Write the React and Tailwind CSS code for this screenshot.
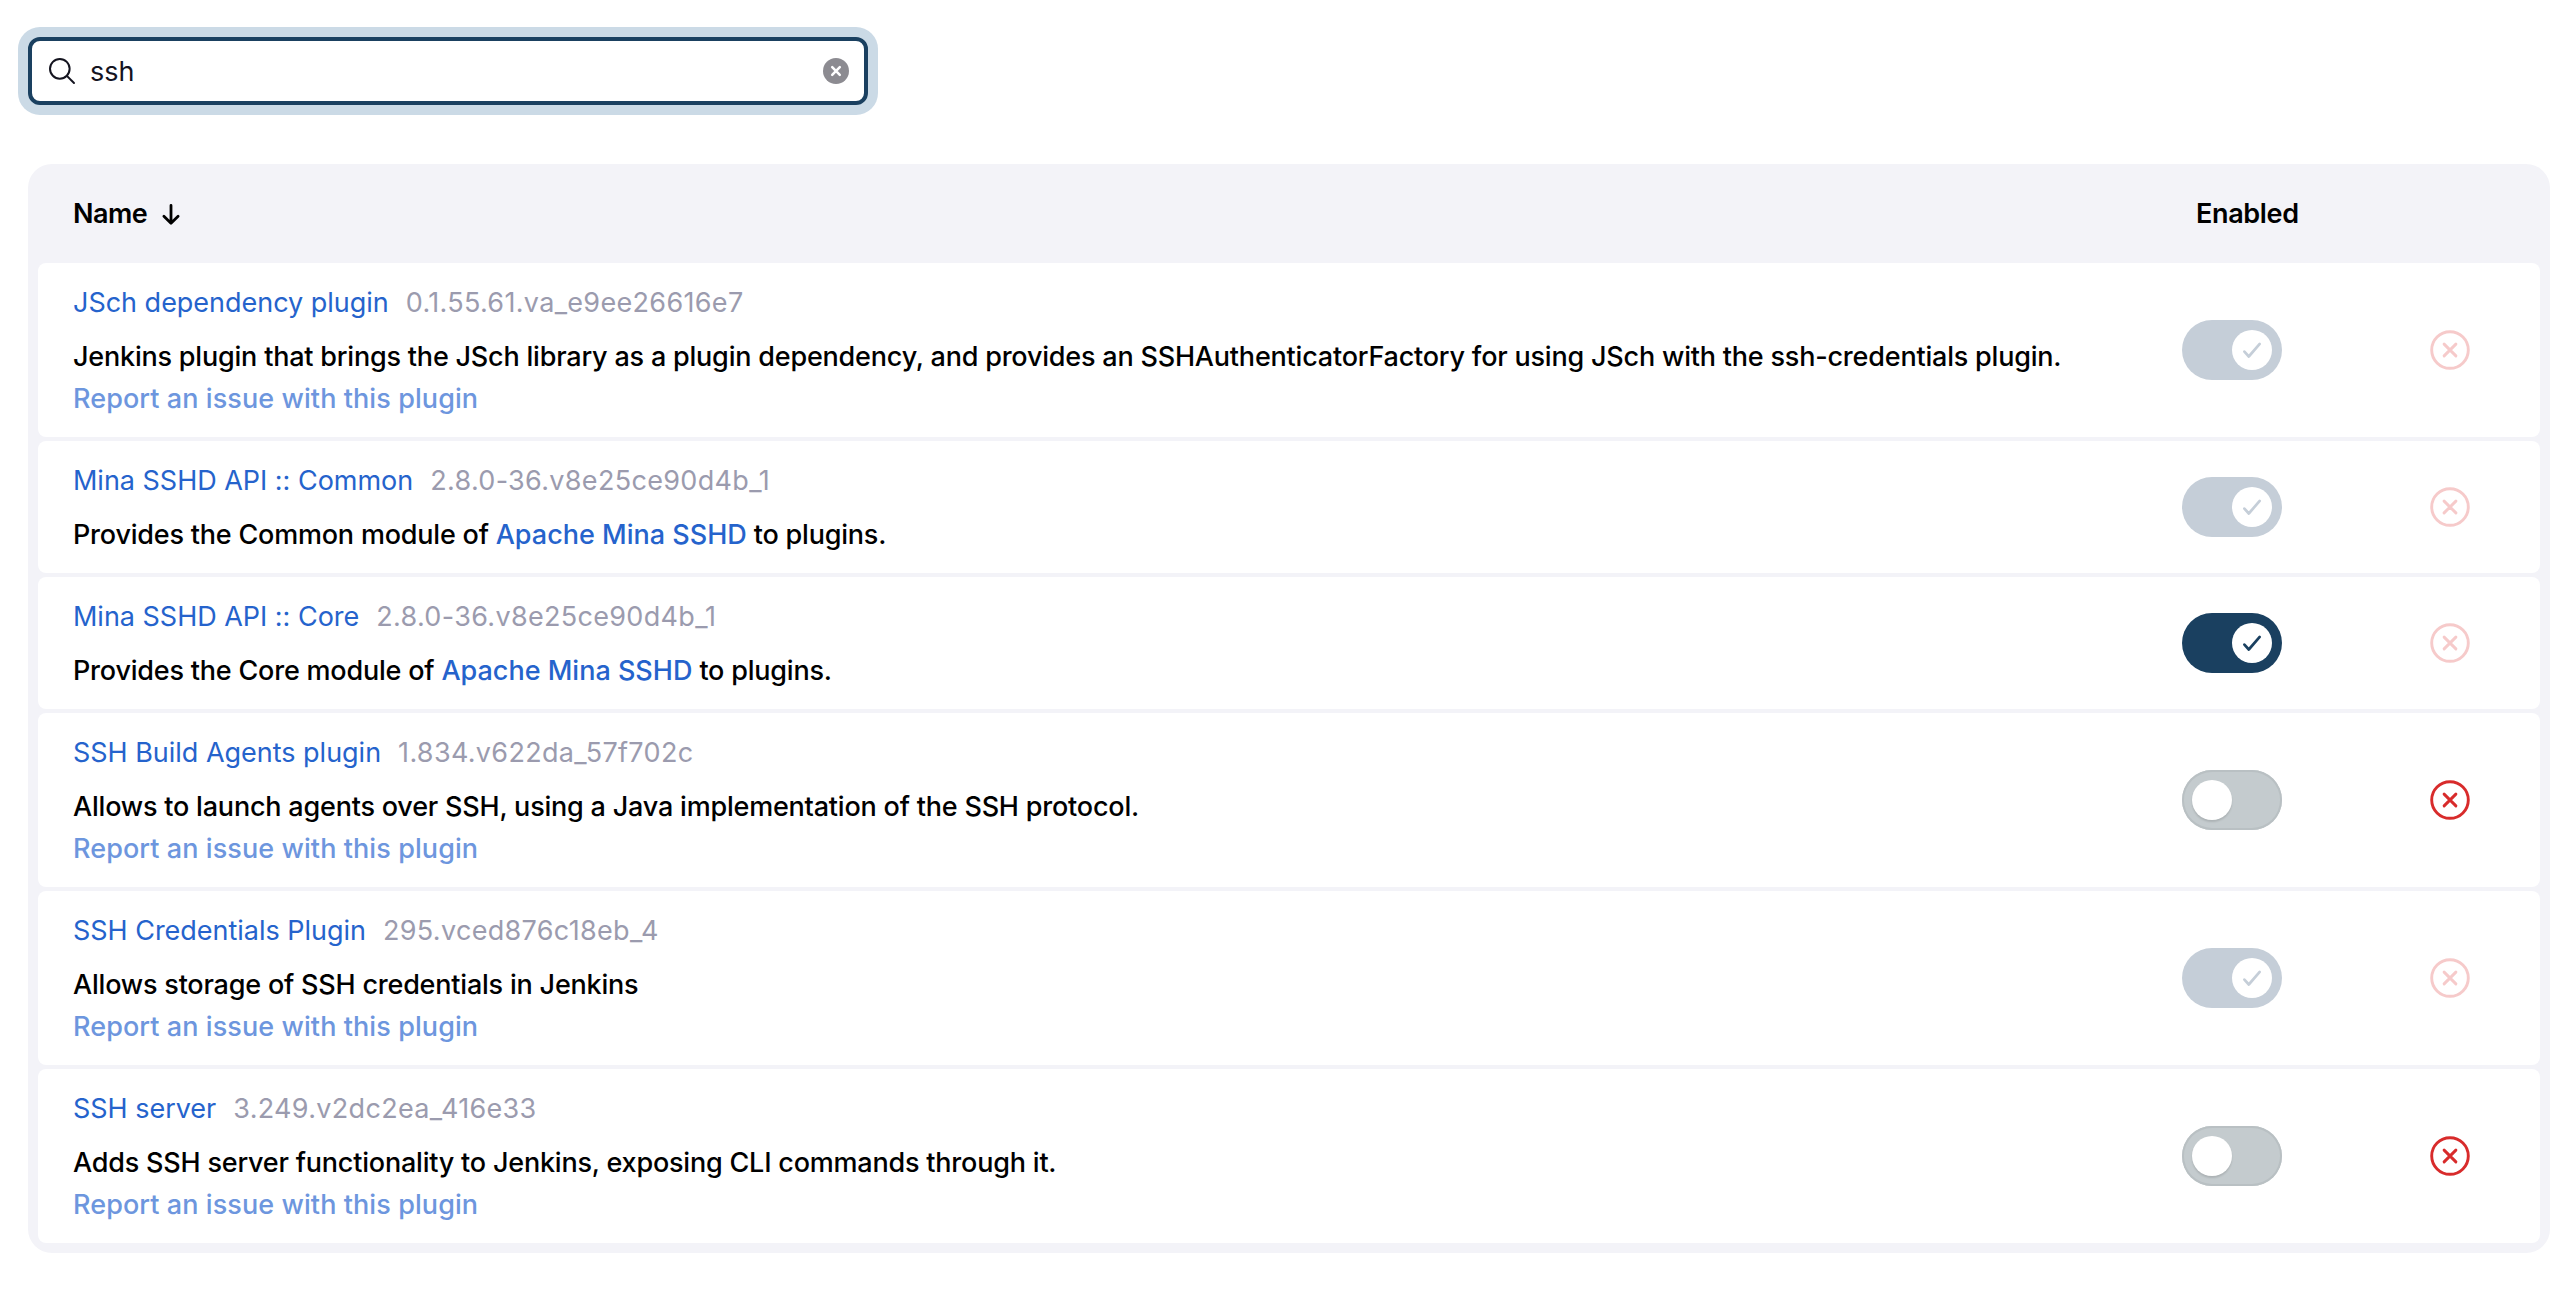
const PLUGINS = [
  {
    name: "JSch dependency plugin",
    version: "0.1.55.61.va_e9ee26616e7",
    description:
      "Jenkins plugin that brings the JSch library as a plugin dependency, and provides an SSHAuthenticatorFactory for using JSch with the ssh-credentials plugin.",
    report: true,
    toggle: "locked",
  },
  {
    name: "Mina SSHD API :: Common",
    version: "2.8.0-36.v8e25ce90d4b_1",
    module: "Common",
    toggle: "locked",
  },
  {
    name: "Mina SSHD API :: Core",
    version: "2.8.0-36.v8e25ce90d4b_1",
    module: "Core",
    toggle: "on",
  },
  {
    name: "SSH Build Agents plugin",
    version: "1.834.v622da_57f702c",
    description:
      "Allows to launch agents over SSH, using a Java implementation of the SSH protocol.",
    report: true,
    toggle: "off",
    removable: true,
  },
  {
    name: "SSH Credentials Plugin",
    version: "295.vced876c18eb_4",
    description: "Allows storage of SSH credentials in Jenkins",
    report: true,
    toggle: "locked",
  },
  {
    name: "SSH server",
    version: "3.249.v2dc2ea_416e33",
    description:
      "Adds SSH server functionality to Jenkins, exposing CLI commands through it.",
    report: true,
    toggle: "off",
    removable: true,
  },
];

function SearchBar() {
  return (
    <div className="flex h-[68px] w-[840px] items-center rounded-[12px] border-4 border-[#1a4060] bg-white pl-[14px] pr-[15px] ring-[10px] ring-[#cbdae6]">
      <svg className="size-8 shrink-0" viewBox="0 0 512 512" fill="none" stroke="#14141f" strokeWidth="32">
        <circle cx="221" cy="221" r="157" strokeMiterlimit="10" />
        <path d="M338.3 338.3L448 448" strokeLinecap="round" />
      </svg>
      <input
        className="ml-3 h-full min-w-0 flex-1 bg-transparent text-[27px] text-[#14141f] outline-none"
        defaultValue="ssh"
      />
      <svg className="size-[26px] shrink-0" viewBox="0 0 26 26">
        <circle cx="13" cy="13" r="13" fill="#8c8b91" />
        <path d="M9.2 9.2l7.6 7.6M16.8 9.2l-7.6 7.6" stroke="#fff" strokeWidth="2.5" strokeLinecap="round" />
      </svg>
    </div>
  );
}

const TRACK = {
  locked: "justify-end bg-[#c5ced8] text-[#c5ced8]",
  on: "justify-end bg-[#1a4060] text-[#1a4060]",
  off: "justify-start bg-[#c4cbce] text-[#c4cbce] shadow-[inset_0_0_0_2px_#b9c0c3]",
};

function Toggle({ state }) {
  return (
    <div className={`flex h-[60px] w-[100px] shrink-0 items-center rounded-[30px] px-[10px] ${TRACK[state]}`}>
      <div className={`size-10 rounded-full bg-white ${state === "off" ? "shadow-[0_2px_2px_rgba(0,0,0,0.12)]" : ""}`}>
        {state !== "off" && (
          <svg className="size-10" viewBox="0 0 40 40" fill="none" stroke="currentColor" strokeWidth="2.7" strokeLinecap="round" strokeLinejoin="round">
            <path d="M12.4 21.6L16.8 26.5L27.7 13.9" />
          </svg>
        )}
      </div>
    </div>
  );
}

function RemoveIcon({ active }) {
  return (
    <svg
      className={`size-12 shrink-0 ${active ? "text-[#d82b2b]" : "text-[#f6caca]"}`}
      viewBox="0 0 48 48"
      fill="none"
      stroke="currentColor"
      strokeWidth="2.9"
      strokeLinecap="round"
    >
      <circle cx="24" cy="24" r="18.3" />
      <path d="M18.1 18.1l11.8 11.8M29.9 18.1L18.1 29.9" />
    </svg>
  );
}

function PluginRow({ plugin }) {
  return (
    <div className="flex items-center gap-[144px] rounded-[8px] bg-white pl-[35px] pr-[66px]">
      <div className="min-w-0 flex-1 whitespace-nowrap pb-[17px] pt-[19px]">
        <div className="flex h-[42px] items-center gap-[17px] leading-[42px]">
          <a className="tracking-[-0.02px] text-[#2563cc]">{plugin.name}</a>
          <span className="tracking-[0.32px] text-[#9b9bae]">{plugin.version}</span>
        </div>
        <div className="mt-3 h-[42px] font-medium leading-[42px] tracking-[-0.205px] text-black">
          {plugin.module ? (
            <>
              Provides the {plugin.module} module of{" "}
              <a className="tracking-normal text-[#2563cc]">Apache Mina SSHD</a> to plugins.
            </>
          ) : (
            plugin.description
          )}
        </div>
        {plugin.report && (
          <a className="block h-[42px] font-medium leading-[42px] tracking-[0.08px] text-[#6d96de]">
            Report an issue with this plugin
          </a>
        )}
      </div>
      <Toggle state={plugin.toggle} />
      <RemoveIcon active={plugin.removable} />
    </div>
  );
}

export default function App() {
  return (
    <div className="h-[1290px] w-[2566px] bg-white pl-7 pr-4 pt-[37px] font-['Inter',sans-serif] text-[27px] antialiased">
      <SearchBar />
      <div className="mt-[59px] rounded-[24px] bg-[#f3f3f8] px-[10px] pb-[10px]">
        <div className="flex h-[99px] items-center pl-[35px] pt-[2px] font-semibold text-black">
          <div className="flex w-[2123px] items-center">
            <span className="tracking-[-0.5px]">Name</span>
            <svg className="mb-[2px] ml-[14px] h-6 w-5" viewBox="0 0 20 24" fill="none" stroke="currentColor" strokeWidth="2.8" strokeLinecap="round" strokeLinejoin="round">
              <path d="M10 3.4V21M2.9 14.2L10 21.2L17.1 14.2" />
            </svg>
          </div>
          <span className="tracking-[-0.35px]">Enabled</span>
        </div>
        <div className="flex flex-col gap-1">
          {PLUGINS.map((plugin) => (
            <PluginRow key={plugin.name} plugin={plugin} />
          ))}
        </div>
      </div>
    </div>
  );
}
